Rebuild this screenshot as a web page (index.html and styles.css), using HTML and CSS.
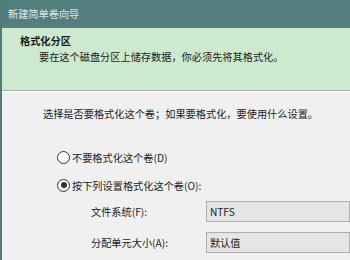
FILE: index.html
```html
<!DOCTYPE html>
<html lang="zh-CN">
<head>
  <meta charset="UTF-8" />
  <title>新建简单卷向导</title>
  <link rel="stylesheet" href="styles.css">
</head>
<body>

<div class="window">
  <div class="titlebar">新建简单卷向导</div>

  <div class="header">
    <h1>格式化分区</h1>
    <p>要在这个磁盘分区上储存数据，你必须先将其格式化。</p>
  </div>

  <div class="content">
    <p class="intro">选择是否要格式化这个卷；如果要格式化，要使用什么设置。</p>

    <label class="radio first">
      <span class="dot"></span>不要格式化这个卷(D)
    </label>
    <label class="radio">
      <span class="dot checked"></span>按下列设置格式化这个卷(O):
    </label>

    <div class="field first">
      <span class="field-label">文件系统(F):</span>
      <div class="select">NTFS</div>
    </div>
    <div class="field">
      <span class="field-label">分配单元大小(A):</span>
      <div class="select">默认值</div>
    </div>
  </div>
</div>

</body>
</html>
```

FILE: styles.css
```css
html, body {
  margin: 0;
  height: 100%;
}
body {
  font-family: "Noto Sans CJK SC", "Microsoft YaHei", sans-serif;
  font-size: 10.2px;
  color: #1b1b1b;
  background: #f0f0f0;
  overflow: hidden;
}
.window {
  border-left: 2px solid #4f7b79;
  height: 100%;
  background: #f0f0f0;
}
.titlebar {
  height: 28px;
  line-height: 28px;
  padding-left: 6px;
  background: #527f7d;
  color: #dde8e6;
}
.header {
  height: 63px;
  box-sizing: border-box;
  padding-top: 5px;
  background: #cdeacf;
  border-bottom: 1px solid #a3b5a6;
  box-shadow: 0 1px 0 #ffffff;
}
.header h1 {
  margin: 0 0 0 18px;
  font-size: 10.2px;
  line-height: 16px;
  font-weight: bold;
}
.header p {
  margin: 0 0 0 37px;
  line-height: 16px;
}
.content {
  padding: 15px 0 0 41px;
}
.intro {
  margin: 0;
  line-height: 16px;
}
.radio {
  display: flex;
  align-items: center;
  height: 16px;
  margin: 12px 0 0 14px;
}
.radio.first {
  margin-top: 27px;
}
.dot {
  width: 11px;
  height: 11px;
  border: 1px solid #333;
  border-radius: 50%;
  background: #fff;
  margin-right: 2px;
  display: flex;
  align-items: center;
  justify-content: center;
}
.dot.checked::after {
  content: "";
  width: 6px;
  height: 6px;
  border-radius: 50%;
  background: #333;
}
.field {
  display: flex;
  align-items: center;
  margin: 10px 0 0 48px;
}
.field.first {
  margin-top: 8px;
}
.field-label {
  width: 128px;
}
.select {
  width: 160px;
  height: 21px;
  line-height: 19px;
  box-sizing: border-box;
  padding-left: 3px;
  border: 1px solid #adadad;
  background: #e5e5e5;
}
```
